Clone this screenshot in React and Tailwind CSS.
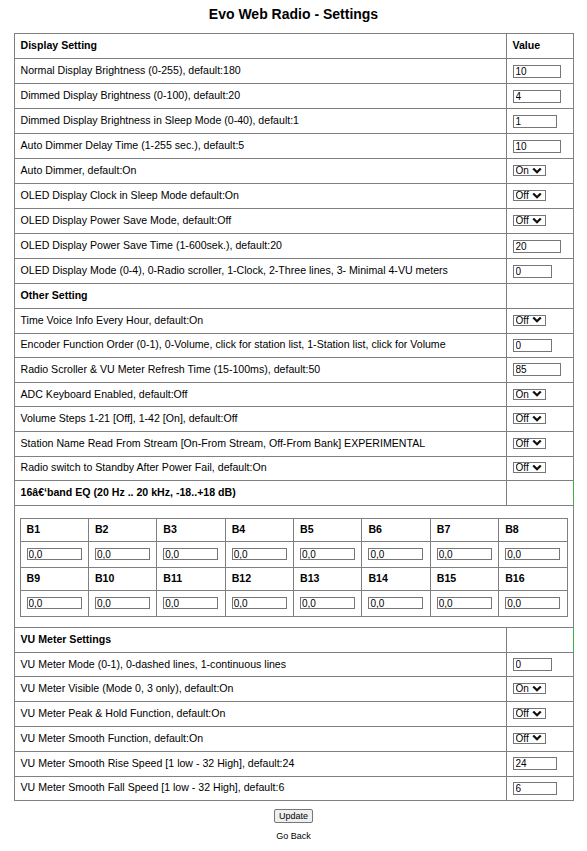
import React from "react";

const display = [
	{ label: "Normal Display Brightness (0-255), default:180", input: "10", w: "w-[48px]" },
	{ label: "Dimmed Display Brightness (0-100), default:20", input: "4", w: "w-[48px]" },
	{ label: "Dimmed Display Brightness in Sleep Mode (0-40), default:1", input: "1", w: "w-[44px]" },
	{ label: "Auto Dimmer Delay Time (1-255 sec.), default:5", input: "10", w: "w-[48px]" },
	{ label: "Auto Dimmer, default:On", select: "On" },
	{ label: "OLED Display Clock in Sleep Mode default:On", select: "Off" },
	{ label: "OLED Display Power Save Mode, default:Off", select: "Off" },
	{ label: "OLED Display Power Save Time (1-600sek.), default:20", input: "20", w: "w-[48px]" },
	{
		label: "OLED Display Mode (0-4), 0-Radio scroller, 1-Clock, 2-Three lines, 3- Minimal 4-VU meters",
		input: "0",
		w: "w-[39px]",
	},
];

const other = [
	{ label: "Time Voice Info Every Hour, default:On", select: "Off" },
	{
		label: "Encoder Function Order (0-1), 0-Volume, click for station list, 1-Station list, click for Volume",
		input: "0",
		w: "w-[39px]",
	},
	{ label: "Radio Scroller & VU Meter Refresh Time (15-100ms), default:50", input: "85", w: "w-[48px]" },
	{ label: "ADC Keyboard Enabled, default:Off", select: "On" },
	{ label: "Volume Steps 1-21 [Off], 1-42 [On], default:Off", select: "Off" },
	{ label: "Station Name Read From Stream [On-From Stream, Off-From Bank] EXPERIMENTAL", select: "Off" },
	{ label: "Radio switch to Standby After Power Fail, default:On", select: "Off" },
];

const vu = [
	{ label: "VU Meter Mode (0-1), 0-dashed lines, 1-continuous lines", input: "0", w: "w-[39px]" },
	{ label: "VU Meter Visible (Mode 0, 3 only), default:On", select: "On" },
	{ label: "VU Meter Peak & Hold Function, default:On", select: "Off" },
	{ label: "VU Meter Smooth Function, default:On", select: "Off" },
	{ label: "VU Meter Smooth Rise Speed [1 low - 32 High], default:24", input: "24", w: "w-[44px]" },
	{ label: "VU Meter Smooth Fall Speed [1 low - 32 High], default:6", input: "6", w: "w-[44px]" },
];

// row heights differ a little per section in the original page
const cellTop = "border border-[#808080] px-[6px] h-[25px] align-middle";
const cellMid = "border border-[#808080] px-[6px] h-[24.6px] align-middle";
const cellVu = "border border-[#808080] px-[6px] h-[24.8px] align-middle";

function Select({ value }) {
	return (
		<span className="relative inline-block">
			<select
				defaultValue={value}
				className="appearance-none block w-[33px] h-[11px] border border-[#767676] bg-white text-[10px] leading-[9px] pl-[2px] text-black outline-none">
				<option>On</option>
				<option>Off</option>
			</select>
			{/* chevron */}
			<svg
				viewBox="0 0 10 7"
				className="absolute right-[4px] top-[2.5px] w-[10px] h-[6px] pointer-events-none"
				fill="none"
				stroke="#111"
				strokeWidth={2.6}
				strokeLinecap="square">
				<path d="M1.5 1.5 L5 5 L8.5 1.5" />
			</svg>
		</span>
	);
}

function Row({ r, cell }) {
	return (
		<tr>
			<td className={cell}>{r.label}</td>
			<td className={cell}>
				{r.select ? (
					<Select value={r.select} />
				) : (
					<input
						defaultValue={r.input}
						className={`block ${r.w} h-[13px] border border-[#767676] bg-white text-[10px] leading-[10px] px-[2px] text-black outline-none`}
					/>
				)}
			</td>
		</tr>
	);
}

function Section({ title, green, cell }) {
	return (
		<tr>
			<th className={`${cell} text-left font-bold`}>{title}</th>
			<td className={`${cell} ${green ? "border-r-[#3cb043]" : ""}`}></td>
		</tr>
	);
}

function EqBlock() {
	const rows = [
		[1, 2, 3, 4, 5, 6, 7, 8],
		[9, 10, 11, 12, 13, 14, 15, 16],
	];
	return (
		<tr>
			<td colSpan={2} className="border border-[#808080] pl-[5px] pr-[5px] pt-[12px] pb-[10px]">
				<table className="border-collapse w-[548px] table-fixed">
					<tbody>
						{rows.map((r, i) => (
							<React.Fragment key={i}>
								<tr>
									{r.map((b) => (
										<th key={b} className="border border-[#808080] h-[23px] px-[6px] text-left font-bold">
											B{b}
										</th>
									))}
								</tr>
								<tr>
									{r.map((b) => (
										<td key={b} className="border border-[#808080] h-[26px] px-[6px]">
											<input
												defaultValue="0,0"
												className="block w-[55px] h-[12px] border border-[#767676] bg-white text-[10px] leading-[10px] px-[1px] text-black outline-none"
											/>
										</td>
									))}
								</tr>
							</React.Fragment>
						))}
					</tbody>
				</table>
			</td>
		</tr>
	);
}

export default function App() {
	return (
		<div className="min-h-screen bg-white text-black font-['Liberation_Sans',Arial,sans-serif] text-[10.6px] pb-4">
			<h1 className="h-[28px] leading-[28px] text-center text-[14px] font-bold">Evo Web Radio - Settings</h1>

			<table className="mt-[5px] mx-auto w-[560px] border-collapse border border-[#808080] table-fixed">
				<colgroup>
					<col />
					<col className="w-[67px]" />
				</colgroup>
				<tbody>
					<tr>
						<th className={`${cellTop} text-left font-bold`}>Display Setting</th>
						<th className={`${cellTop} text-left font-bold`}>Value</th>
					</tr>
					{display.map((r) => (
						<Row key={r.label} r={r} cell={cellTop} />
					))}
					<Section title="Other Setting" cell={cellTop} />
					{other.map((r) => (
						<Row key={r.label} r={r} cell={cellMid} />
					))}
					<Section title={"16â€\u2018band EQ (20 Hz .. 20 kHz, -18..+18 dB)"} green cell={cellMid} />
					<EqBlock />
					<Section title="VU Meter Settings" green cell={cellVu} />
					{vu.map((r) => (
						<Row key={r.label} r={r} cell={cellVu} />
					))}
				</tbody>
			</table>

			<div className="flex flex-col items-center mt-[8px]">
				<button className="h-[14px] px-[4px] border border-[#767676] rounded-[2px] bg-[#efefef] text-[9px] leading-[9px] text-black">
					Update
				</button>
				<a className="mt-[7px] text-[9px] text-black">Go Back</a>
			</div>
		</div>
	);
}
